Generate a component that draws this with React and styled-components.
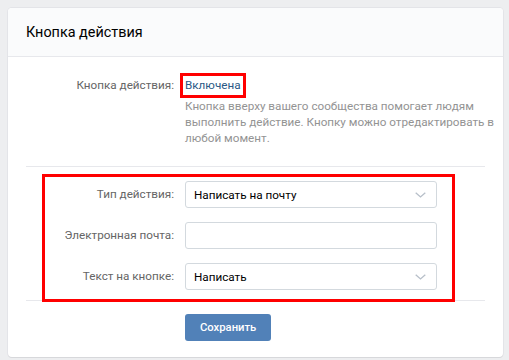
import React from 'react';
import styled, { createGlobalStyle } from 'styled-components';

const GlobalStyle = createGlobalStyle`
  html, body {
    margin: 0;
    padding: 0;
    background: #edeef0;
  }
  body {
    padding: 8px;
    font-family: Roboto, 'Open Sans', 'DejaVu Sans', sans-serif;
    font-size: 11.7px;
    color: #000;
  }
`;

const Card = styled.div`
  width: 495px;
  background: #fff;
  border-radius: 4px;
  box-shadow: 0 1px 0 0 #d7d8db, 0 0 0 1px #e3e4e8;
  overflow: hidden;
`;

const Header = styled.div`
  height: 48px;
  display: flex;
  align-items: center;
  padding: 0 18px;
  background: #fafbfc;
  border-bottom: 1px solid #e7e8ec;
  font-size: 14.4px;
  color: #000;
`;

const Section = styled.div`
  margin: 0 18px;
  padding: ${(p) => p.pad || '0'};
  border-bottom: ${(p) => (p.last ? 'none' : '1px solid #e7e8ec')};
`;

const Row = styled.div`
  display: grid;
  grid-template-columns: ${(p) => p.labelWidth}px 1fr;
  column-gap: 11px;
  align-items: ${(p) => p.align || 'center'};
  & + & {
    margin-top: 14px;
  }
`;

const Label = styled.div`
  text-align: right;
  color: #656565;
  line-height: ${(p) => p.lh || '27px'};
  white-space: nowrap;
`;

const Marked = styled.span`
  display: inline-block;
  border: 3px solid #ff0000;
  padding: 0 2px;
  line-height: 19px;
  margin-left: -5px;
  color: #2a5885;
`;

const Description = styled.div`
  width: 310px;
  color: #939393;
  line-height: 16px;
`;

const Highlight = styled.div`
  margin: 7px 0 -2px 16px;
  width: 413px;
  box-sizing: border-box;
  border: 3px solid #ff0000;
  padding: 4px 0 9px;
`;

const Field = styled.div`
  box-sizing: border-box;
  width: 252px;
  height: 27px;
  border: 1px solid #d3d9de;
  border-radius: 3px;
  background: #fff;
  display: flex;
  align-items: center;
  justify-content: space-between;
  padding: 0 10px 0 8px;
  color: #000;
`;

const Button = styled.button`
  height: 27px;
  padding: 0 15px;
  border: none;
  border-radius: 3px;
  background: #5181b8;
  color: #fff;
  font-family: inherit;
  font-size: 11.25px;
  font-weight: 500;
  cursor: pointer;
`;

const Chevron = () => (
  <svg width="11" height="6" viewBox="0 0 11 6" fill="none">
    <polyline points="0.7,0.7 5.5,5 10.3,0.7" stroke="#b7bfc9" strokeWidth="1.3" />
  </svg>
);

const Select = ({ value }) => (
  <Field>
    <span>{value}</span>
    <Chevron />
  </Field>
);

export default function App() {
  return (
    <>
      <GlobalStyle />
      <Card>
        <Header>Кнопка действия</Header>
        <Section pad="16px 0 20px">
          <Row labelWidth={148} align="start">
            <Label lh="25px">Кнопка действия:</Label>
            <div>
              <Marked>Включена</Marked>
              <Description>
                Кнопка вверху вашего сообщества помогает людям выполнить действие. Кнопку можно
                отредактировать в любой момент.
              </Description>
            </div>
          </Row>
        </Section>
        <Section>
          <Highlight>
            <Row labelWidth={129}>
              <Label>Тип действия:</Label>
              <Select value="Написать на почту" />
            </Row>
            <Row labelWidth={129}>
              <Label>Электронная почта:</Label>
              <Field />
            </Row>
            <Row labelWidth={129}>
              <Label>Текст на кнопке:</Label>
              <Select value="Написать" />
            </Row>
          </Highlight>
        </Section>
        <Section last pad="13px 0 16px 159px">
          <Button>Сохранить</Button>
        </Section>
      </Card>
    </>
  );
}
